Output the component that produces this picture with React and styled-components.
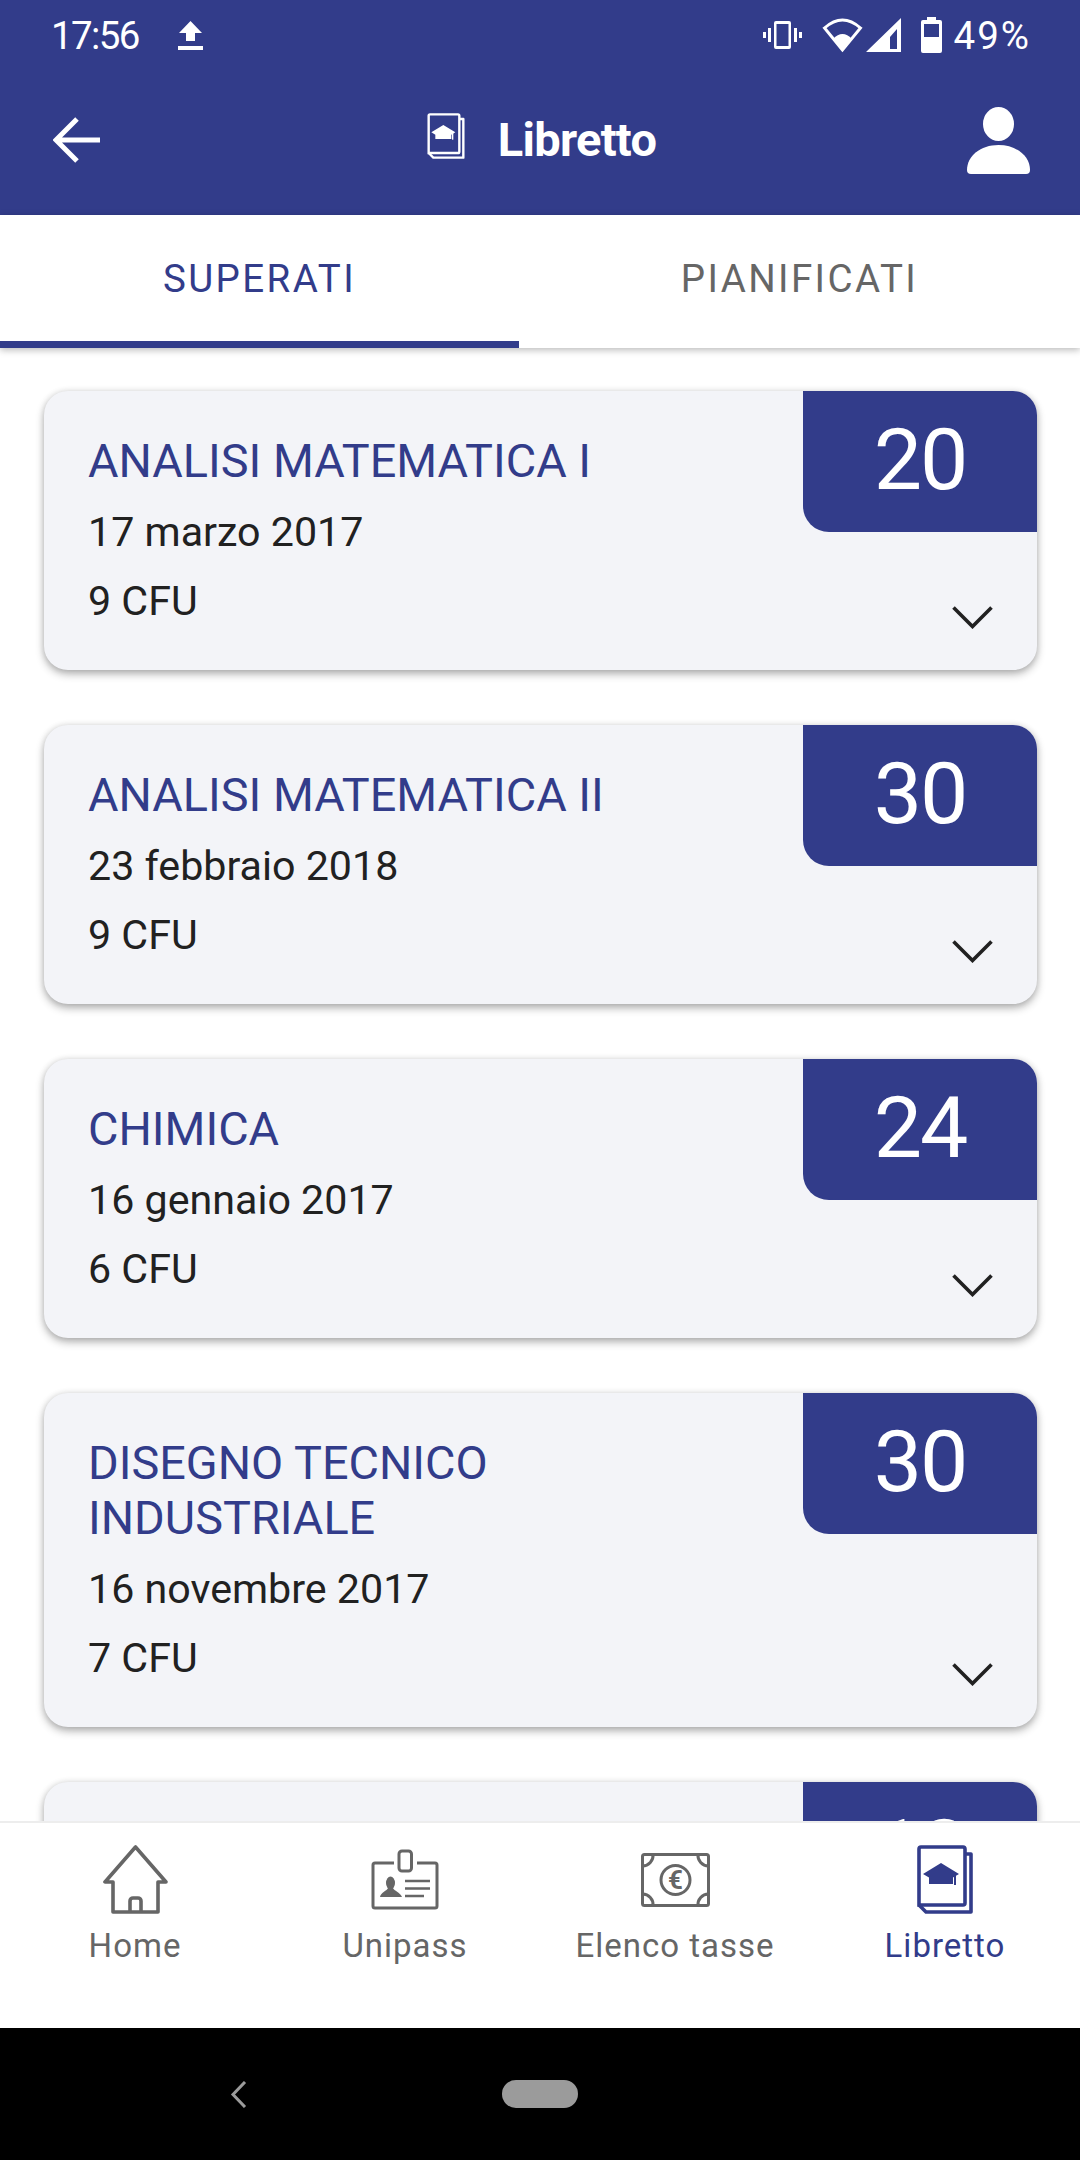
import React from "react";
import styled, { createGlobalStyle } from "styled-components";

const brand = "#323c8a";
const grey = "#666666";

const GlobalStyle = createGlobalStyle`
	html, body {
		margin: 0;
		padding: 0;
		background: #fff;
	}
	body {
		font-family: Roboto, "Liberation Sans", sans-serif;
	}
`;

const Screen = styled.div`
	display: flex;
	flex-direction: column;
	width: 1080px;
	height: 2160px;
	overflow: hidden;
`;

const Header = styled.header`
	flex: none;
	height: 215px;
	background: ${brand};
	color: #fff;
`;

const StatusBar = styled.div`
	display: flex;
	align-items: center;
	height: 70px;
	padding: 0 49px 0 51px;
	font-size: 38.5px;
`;

const Time = styled.span`
	width: 127px;
	letter-spacing: -1.6px;
`;

const Percent = styled.span`
	letter-spacing: 2px;
`;

const StatusIcons = styled.div`
	display: flex;
	align-items: center;
	margin-left: auto;
`;

const StatusSvg = styled.svg`
	display: block;
	margin-right: ${props => props.$gap || 0}px;
	fill: #fff;
`;

const Toolbar = styled.div`
	display: grid;
	grid-template-columns: 1fr auto 1fr;
	align-items: center;
	height: 140px;
	padding: 0 50px 0 53px;
`;

const ToolbarTitle = styled.div`
	display: flex;
	align-items: center;
	gap: 33px;
	margin-top: -8px;
	font-size: 47px;
	font-weight: 700;
	letter-spacing: -0.7px;
`;

const ToolbarText = styled.span`
	margin-top: 6px;
`;

const ProfileSvg = styled.svg`
	justify-self: end;
	fill: #fff;
`;

const Tabs = styled.nav`
	flex: none;
	position: relative;
	z-index: 1;
	display: grid;
	grid-template-columns: 519px 1fr;
	height: 133px;
	background: #fff;
	box-shadow: 0 2px 7px rgba(0, 0, 0, 0.28);
`;

const Tab = styled.div`
	display: flex;
	align-items: center;
	justify-content: center;
	font-size: 38.5px;
	letter-spacing: 2.4px;
	color: ${props => (props.$active ? brand : grey)};
	border-bottom: 7px solid ${props => (props.$active ? brand : "transparent")};
`;

const List = styled.main`
	flex: 1;
	min-height: 0;
	overflow: hidden;
	display: flex;
	flex-direction: column;
	gap: 55px;
	padding: 43px 43px 0 44px;
`;

const Card = styled.article`
	flex: none;
	display: flex;
	justify-content: space-between;
	overflow: hidden;
	border-radius: 24px;
	background: #f3f4f8;
	box-shadow: 0 4px 8px rgba(0, 0, 0, 0.3), 0 0 6px rgba(0, 0, 0, 0.1);
`;

const CardBody = styled.div`
	padding: 43px 0 45px 44px;
	width: 560px;
`;

const CardTitle = styled.h2`
	margin: 0 0 19px;
	min-height: 55px;
	font-size: 46.8px;
	font-weight: 400;
	line-height: 55px;
	color: ${brand};
`;

const CardLine = styled.p`
	margin: ${props => props.$top || 0}px 0 0;
	min-height: 48px;
	font-size: 41.2px;
	line-height: 48px;
	color: #212121;
`;

const CardSide = styled.div`
	flex: none;
	display: flex;
	flex-direction: column;
	align-items: flex-end;
	width: 234px;
`;

const Grade = styled.div`
	display: flex;
	align-items: center;
	justify-content: center;
	width: 100%;
	height: 141px;
	padding-bottom: 5px;
	box-sizing: border-box;
	border-bottom-left-radius: 26px;
	background: ${brand};
	color: #fff;
	font-size: 86px;
	letter-spacing: -2px;
`;

const Chevron = styled.svg`
	margin: auto 44px 41px 0;
`;

const BottomNav = styled.nav`
	flex: none;
	position: relative;
	z-index: 1;
	display: grid;
	grid-template-columns: repeat(4, 270px);
	height: 207px;
	box-sizing: border-box;
	padding-top: 22px;
	background: #fff;
	border-top: 2px solid #ededed;
`;

const NavItem = styled.div`
	display: flex;
	flex-direction: column;
	align-items: center;
	color: ${props => (props.$active ? brand : grey)};
`;

const NavIcon = styled.div`
	display: flex;
	align-items: center;
	justify-content: center;
	height: 69px;
`;

const NavLabel = styled.span`
	margin-top: 12px;
	font-size: 33px;
	line-height: 40px;
	letter-spacing: 1px;
`;

const SystemBar = styled.div`
	flex: none;
	display: flex;
	align-items: center;
	height: 132px;
	padding-left: 230px;
	background: #000;
`;

const SystemBack = styled.svg`
	margin-right: 255px;
`;

const HomePill = styled.div`
	width: 76px;
	height: 28px;
	border-radius: 14px;
	background: #9b9b9b;
`;

const exams = [
	{ title: "ANALISI MATEMATICA I", date: "17 marzo 2017", cfu: "9 CFU", grade: 20 },
	{ title: "ANALISI MATEMATICA II", date: "23 febbraio 2018", cfu: "9 CFU", grade: 30 },
	{ title: "CHIMICA", date: "16 gennaio 2017", cfu: "6 CFU", grade: 24 },
	{ title: "DISEGNO TECNICO INDUSTRIALE", date: "16 novembre 2017", cfu: "7 CFU", grade: 30 },
	{ title: "", date: "", cfu: "", grade: 18 }
];

const BookIcon = ({ color, width, height }) => (
	<svg width={width} height={height} viewBox="0 0 56 69" fill="none">
		<path
			d="M4 2h42a2 2 0 0 1 2 2v54a2 2 0 0 1-2 2H2V4a2 2 0 0 1 2-2z"
			stroke={color}
			strokeWidth="3.6"
		/>
		<path
			d="M48 9h6v58H9l-7-7"
			stroke={color}
			strokeWidth="3.6"
			strokeLinejoin="round"
		/>
		<path
			d="M6 29 24 18l18 11-6 3.500V39H12v-6.500z"
			fill={color}
		/>
		<rect x="37" y="30" width="2" height="10" fill={color} />
	</svg>
);

const HomeIcon = () => (
	<svg width="65" height="69" viewBox="0 0 65 69" fill="none" stroke={grey} strokeWidth="3.6" strokeLinejoin="round">
		<path d="M32.500 2 2 37h8v30h45V37h8z" />
		<path d="M27 67V56a3 3 0 0 1 3-3h5a3 3 0 0 1 3 3v11" />
	</svg>
);

const UnipassIcon = () => (
	<svg width="68" height="61" viewBox="0 0 68 61" fill="none" stroke={grey} strokeWidth="3">
		<path d="M23 14H4a2 2 0 0 0-2 2v41a2 2 0 0 0 2 2h60a2 2 0 0 0 2-2V16a2 2 0 0 0-2-2H46" />
		<rect x="28" y="2" width="12.500" height="20" rx="3" />
		<path d="M34 32h25M34 39.500h25M34 47h19" strokeWidth="2.500" />
		<ellipse cx="19.500" cy="34" rx="4.500" ry="6.500" fill={grey} stroke="none" />
		<path d="M9 48c1-5 7-6 8-9h5c1 3 7 4 9 9z" fill={grey} stroke="none" />
	</svg>
);

const MoneyIcon = () => (
	<svg width="69" height="54" viewBox="0 0 69 54" fill="none" stroke={grey} strokeWidth="3">
		<rect x="1.500" y="1.500" width="66" height="51" rx="2" />
		<circle cx="34.500" cy="27" r="14.500" />
		<path d="M1.500 13A10.500 10.500 0 0 0 12 1.500M57 1.500A10.500 10.500 0 0 0 67.500 13M1.500 41A10.500 10.500 0 0 1 12 52.500M57 52.500A10.500 10.500 0 0 1 67.500 41" />
		<text x="34.500" y="36" textAnchor="middle" fontFamily="Roboto, sans-serif" fontWeight="700" fontSize="26" fill={grey} stroke="none">€</text>
	</svg>
);

const tabsNav = [
	{ label: "Home", icon: <HomeIcon /> },
	{ label: "Unipass", icon: <UnipassIcon /> },
	{ label: "Elenco tasse", icon: <MoneyIcon /> },
	{ label: "Libretto", icon: <BookIcon color={brand} width={56} height={69} />, active: true }
];

const App = () => (
	<Screen>
		<GlobalStyle />
		<Header>
			<StatusBar>
				<Time>17:56</Time>
				<StatusSvg width="25" height="29" viewBox="0 0 25 29">
					<path d="M12.500 0 24 12h-7v8H8v-8H1z" />
					<rect y="25" width="25" height="4" />
				</StatusSvg>
				<StatusIcons>
					<StatusSvg $gap={20} width="39" height="28" viewBox="0 0 39 28">
						<path
							fillRule="evenodd"
							d="M13 0h13a2 2 0 0 1 2 2v24a2 2 0 0 1-2 2H13a2 2 0 0 1-2-2V2a2 2 0 0 1 2-2zm.5 3v22h12V3z"
						/>
						<path d="M5 7h3v14H5zM31 7h3v14h-3zM0 11h3v6H0zM36 11h3v6h-3z" />
					</StatusSvg>
					<StatusSvg $gap={3} width="41" height="35" viewBox="0 0 41 35">
						<path d="M20.500 32 2.500 10Q20.500-6 38.500 10z" fill="none" stroke="#fff" strokeWidth="3" />
						<path d="M20.500 33 11 21Q20.500 11 30 21z" />
					</StatusSvg>
					<StatusSvg $gap={20} width="35" height="34" viewBox="0 0 35 34">
						<path fillRule="evenodd" d="M0 34 35 0v34zM24 19v12h7V11z" />
					</StatusSvg>
					<StatusSvg $gap={12} width="21" height="36" viewBox="0 0 21 36">
						<path
							fillRule="evenodd"
							d="M6 0h9v3h4a2 2 0 0 1 2 2v29a2 2 0 0 1-2 2H2a2 2 0 0 1-2-2V5a2 2 0 0 1 2-2h4zM3 7v13h15V7z"
						/>
					</StatusSvg>
					<Percent>49%</Percent>
				</StatusIcons>
			</StatusBar>
			<Toolbar>
				<svg width="47" height="46" viewBox="0 0 47 46" fill="none" stroke="#fff" strokeWidth="5">
					<path d="M47 23H4M24 2 3 23l21 21" />
				</svg>
				<ToolbarTitle>
					<BookIcon color="#fff" width={38} height={46} />
					<ToolbarText>Libretto</ToolbarText>
				</ToolbarTitle>
				<ProfileSvg width="63" height="67" viewBox="0 0 63 67">
					<ellipse cx="31.500" cy="17" rx="15.500" ry="17" />
					<path d="M31.500 38c18 0 31.500 11 31.500 25a4 4 0 0 1-4 4H4a4 4 0 0 1-4-4c0-14 13.500-25 31.500-25z" />
				</ProfileSvg>
			</Toolbar>
		</Header>
		<Tabs>
			<Tab $active>SUPERATI</Tab>
			<Tab>PIANIFICATI</Tab>
		</Tabs>
		<List>
			{exams.map((exam, i) => (
				<Card key={i}>
					<CardBody>
						<CardTitle>{exam.title}</CardTitle>
						<CardLine>{exam.date}</CardLine>
						<CardLine $top={21}>{exam.cfu}</CardLine>
					</CardBody>
					<CardSide>
						<Grade>{exam.grade}</Grade>
						<Chevron width="41" height="23" viewBox="0 0 41 23" fill="none" stroke="#212121" strokeWidth="3.600">
							<path d="M1.500 1.500 20.500 20.500 39.500 1.500" />
						</Chevron>
					</CardSide>
				</Card>
			))}
		</List>
		<BottomNav>
			{tabsNav.map(item => (
				<NavItem key={item.label} $active={item.active}>
					<NavIcon>{item.icon}</NavIcon>
					<NavLabel>{item.label}</NavLabel>
				</NavItem>
			))}
		</BottomNav>
		<SystemBar>
			<SystemBack width="17" height="27" viewBox="0 0 17 27" fill="none" stroke="#9b9b9b" strokeWidth="3">
				<path d="M15 1 3 13.500 15 26" />
			</SystemBack>
			<HomePill />
		</SystemBar>
	</Screen>
);

export default App;
